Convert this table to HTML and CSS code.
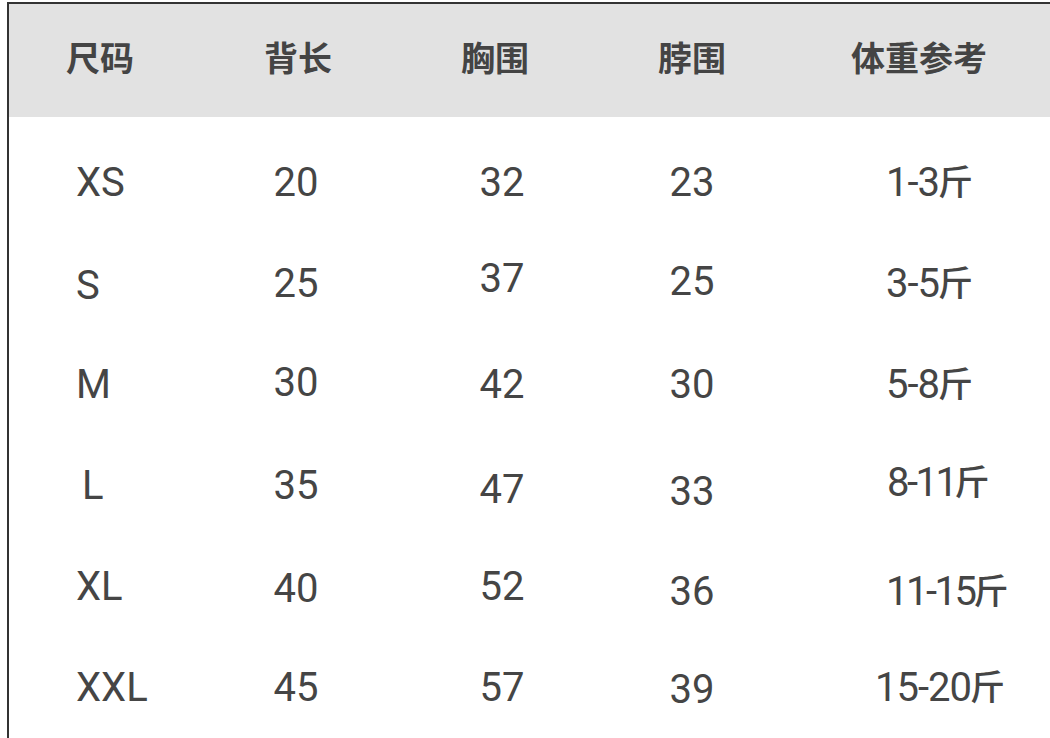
FILE: index.html
```html
<!DOCTYPE html>
<html lang="zh-CN">
<head>
<meta charset="utf-8">
<title>尺码表</title>
<link rel="stylesheet" href="styles.css">
</head>
<body>
<div class="sheet">
  <div class="head cols">
    <div class="th">尺码</div>
    <div class="th">背长</div>
    <div class="th">胸围</div>
    <div class="th">脖围</div>
    <div class="th">体重参考</div>
  </div>
  <div class="body cols">
    <div class="td c1">XS</div>
    <div class="td c2">20</div>
    <div class="td c3">32</div>
    <div class="td c4">23</div>
    <div class="td c5">1-3<span class="jin">斤</span></div>

    <div class="td c1 dn2">S</div>
    <div class="td c2">25</div>
    <div class="td c3 up4">37</div>
    <div class="td c4 up2">25</div>
    <div class="td c5">3-5<span class="jin">斤</span></div>

    <div class="td c1">M</div>
    <div class="td c2 up2">30</div>
    <div class="td c3">42</div>
    <div class="td c4">30</div>
    <div class="td c5">5-8<span class="jin">斤</span></div>

    <div class="td c1 indent">L</div>
    <div class="td c2">35</div>
    <div class="td c3 dn4">47</div>
    <div class="td c4 dn6">33</div>
    <div class="td c5 up3 shift2 tight">8-11<span class="jin">斤</span></div>

    <div class="td c1">XL</div>
    <div class="td c2 dn2">40</div>
    <div class="td c3">52</div>
    <div class="td c4 dn5">36</div>
    <div class="td c5 dn5 tight">11-15<span class="jin">斤</span></div>

    <div class="td c1">XXL</div>
    <div class="td c2">45</div>
    <div class="td c3">57</div>
    <div class="td c4 dn2">39</div>
    <div class="td c5 outdent">15-20<span class="jin">斤</span></div>
  </div>
</div>
</body>
</html>
```
FILE: styles.css
```css
html, body {
  margin: 0;
  padding: 0;
  background: #ffffff;
}

body {
  width: 1050px;
  height: 738px;
  overflow: hidden;
  font-family: Roboto, "Noto Sans CJK SC", sans-serif;
  color: #454545;
}

.sheet {
  margin: 2px 0 0 7px;
  border-top: 2px solid #333333;
  border-left: 2px solid #333333;
}

.cols {
  display: grid;
  grid-template-columns: 182px 214px 180px 214px 240px;
}

.head {
  background: #e2e2e2;
  height: 113px;
}

.th {
  font-family: "Noto Sans CJK SC", sans-serif;
  font-weight: 700;
  font-size: 34px;
  line-height: 1;
  color: #444444;
  display: flex;
  align-items: center;
  justify-content: center;
  padding-bottom: 7px;
}

.body {
  padding-top: 15px;
  grid-auto-rows: 101px;
}

.td {
  display: flex;
  align-items: center;
  font-size: 40px;
  line-height: 1;
  white-space: nowrap;
  box-sizing: border-box;
}

.jin {
  font-family: "Noto Sans CJK SC", sans-serif;
  font-size: 35px;
  font-weight: 500;
  letter-spacing: 0;
  margin-left: -1px;
  margin-bottom: 7px;
}

.c1 { padding-left: 67px; }
.c2 { justify-content: center; padding-right: 4px; }
.c3 { justify-content: center; padding-left: 14px; }
.c4 { justify-content: center; }
.c5 { padding-left: 87px; letter-spacing: -1px; }
.tight { letter-spacing: -2.5px; }

.indent { padding-left: 73px; }
.shift2 { padding-left: 88px; }
.outdent { padding-left: 76px; }

.up2 { padding-bottom: 4px; }
.up3 { padding-bottom: 6px; }
.up4 { padding-bottom: 9px; }
.dn2 { padding-top: 5px; }
.dn4 { padding-top: 9px; }
.dn5 { padding-top: 11px; }
.dn6 { padding-top: 13px; }
```
